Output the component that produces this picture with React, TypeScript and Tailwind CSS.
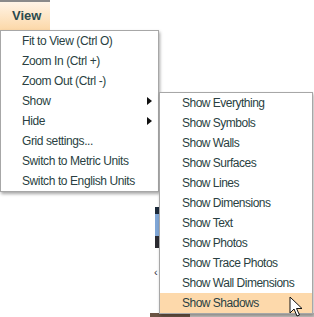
import React from "react";

const mainItems: { label: string; arrow?: boolean }[] = [
  { label: "Fit to View (Ctrl O)" },
  { label: "Zoom In (Ctrl +)" },
  { label: "Zoom Out (Ctrl -)" },
  { label: "Show", arrow: true },
  { label: "Hide", arrow: true },
  { label: "Grid settings..." },
  { label: "Switch to Metric Units" },
  { label: "Switch to English Units" },
];

const subItems = [
  "Show Everything",
  "Show Symbols",
  "Show Walls",
  "Show Surfaces",
  "Show Lines",
  "Show Dimensions",
  "Show Text",
  "Show Photos",
  "Show Trace Photos",
  "Show Wall Dimensions",
  "Show Shadows",
];

function Arrow() {
  return (
    <svg width="5" height="8" viewBox="0 0 5 8" className="ml-auto mr-[6px]">
      <path d="M0 0 L5 4 L0 8 Z" fill="#111" />
    </svg>
  );
}

function Cursor() {
  return (
    <svg width="14" height="22" viewBox="0 0 14 22" className="absolute right-[9px] top-[3px]">
      <path
        d="M1 1 L1 17 L5 13 L8 20 L10.5 19 L7.5 12.5 L13 12.5 Z"
        fill="#fff"
        stroke="#111"
        strokeWidth="1"
        strokeLinejoin="round"
      />
    </svg>
  );
}

export default function App() {
  return (
    <div
      className="relative w-[314px] h-[317px] overflow-hidden bg-white text-[12px] tracking-[-0.4px] text-[#2a3f42]"
      style={{ fontFamily: '"Liberation Sans", Arial, sans-serif' }}
    >
      {/* background canvas fragments (behind menus) */}
      <div className="absolute left-[155px] top-[207px] w-[4px] h-[12px] bg-[#1c2a3a]" />
      <div className="absolute left-[155px] top-[214px] w-[4px] h-[22px] bg-[#7fa6d6]" />
      <div className="absolute left-[155px] top-[236px] w-[4px] h-[12px] bg-[#2a2a30]" />
      <div className="absolute left-[154px] top-[264px] text-[11px] text-[#334]">‹</div>
      <div className="absolute left-[150px] top-[313px] w-[40px] h-[4px] bg-[#6b5444]" />
      <div className="absolute left-[190px] top-[313px] w-[124px] h-[4px] bg-[#c9c6c2]" />

      <div className="relative flex flex-col">
        {/* View tab */}
        <div className="w-[50px] h-[30px] border-t-2 border-[#8a8a8a] bg-gradient-to-b from-[#fff4e6] to-[#fcd8a8] flex items-center pl-[12px]">
          <span className="font-bold text-[13px] tracking-normal text-[#2b4a4e]">View</span>
        </div>

        <div className="flex items-start">
          {/* main menu */}
          <div className="w-[159px] border border-[#a7a7a7] bg-white shadow-[1px_2px_3px_rgba(0,0,0,0.35)]">
            {mainItems.map((it) => (
              <div key={it.label} className="h-[20px] flex items-center pl-[21px]">
                {it.label}
                {it.arrow && <Arrow />}
              </div>
            ))}
          </div>

          {/* sub menu */}
          <div className="relative mt-[62px] w-[154px] border border-[#a7a7a7] bg-white shadow-[1px_2px_3px_rgba(0,0,0,0.3)] tracking-[-0.5px]">
            {subItems.map((s) => (
              <div
                key={s}
                className={
                  "relative h-[20px] flex items-center pl-[22px] " +
                  (s === "Show Shadows" ? "bg-[#fdd9ab]" : "")
                }
              >
                {s}
                {s === "Show Shadows" && <Cursor />}
              </div>
            ))}
          </div>
        </div>
      </div>
    </div>
  );
}
